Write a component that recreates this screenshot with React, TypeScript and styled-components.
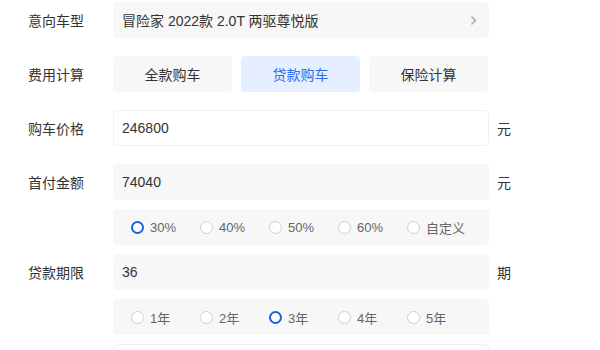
import React from "react";
import styled, { createGlobalStyle } from "styled-components";

const Global = createGlobalStyle`
  html, body { margin: 0; padding: 0; background: #fff; }
  body { font-family: "Liberation Sans", "Noto Sans CJK SC", sans-serif; color: #333; }
`;

const Form = styled.div`
  display: flex;
  flex-direction: column;
  padding: 2px 0 0 28px;
`;

const Row = styled.div<{ $gap: number }>`
  display: flex;
  align-items: center;
  margin-top: ${(p) => p.$gap}px;
  height: 36px;
`;

const Label = styled.div`
  width: 85px;
  font-size: 14px;
  color: #333;
  flex-shrink: 0;
`;

const Field = styled.div<{ $white?: boolean }>`
  box-sizing: border-box;
  width: 376px;
  height: 36px;
  border-radius: 4px;
  background: ${(p) => (p.$white ? "#fff" : "#f7f7f7")};
  border: 1px solid ${(p) => (p.$white ? "#f0f0f0" : "#f7f7f7")};
  display: flex;
  align-items: center;
  justify-content: space-between;
  padding: 0 11px 0 8px;
  font-size: 14px;
  color: #333;
`;

const Unit = styled.div`
  margin-left: 8px;
  font-size: 14px;
  color: #333;
`;

const Tabs = styled.div`
  display: grid;
  grid-template-columns: repeat(3, 119px);
  gap: 9px;
`;

const Tab = styled.div<{ $active?: boolean }>`
  height: 36px;
  border-radius: 4px;
  display: flex;
  align-items: center;
  justify-content: center;
  font-size: 14px;
  background: ${(p) => (p.$active ? "#e6efff" : "#f7f7f7")};
  color: ${(p) => (p.$active ? "#2b6bf0" : "#333")};
`;

const RadioGroup = styled.div`
  box-sizing: border-box;
  width: 376px;
  height: 36px;
  border-radius: 4px;
  background: #f7f7f7;
  display: flex;
  align-items: center;
  padding-left: 18px;
`;

const RadioItem = styled.div`
  width: 69px;
  display: flex;
  align-items: center;
  gap: 6px;
  font-size: 13px;
  color: #666;
`;

const Circle = styled.span<{ $on?: boolean }>`
  box-sizing: border-box;
  width: 13px;
  height: 13px;
  border-radius: 50%;
  background: #fff;
  border: ${(p) => (p.$on ? "2.5px solid #1a5fe0" : "1px solid #cfcfd4")};
  flex-shrink: 0;
`;

const Spacer = styled.div`
  width: 85px;
  flex-shrink: 0;
`;

const Chevron = () => (
  <svg width="7" height="11" viewBox="0 0 7 11">
    <polyline points="1.5,1.5 5.5,5.5 1.5,9.5" fill="none" stroke="#a8a8a8" strokeWidth="1.4" />
  </svg>
);

const Radios = ({ items, sel }: { items: string[]; sel: number }) => (
  <RadioGroup>
    {items.map((t, i) => (
      <RadioItem key={t}>
        <Circle $on={i === sel} />
        {t}
      </RadioItem>
    ))}
  </RadioGroup>
);

export default function App() {
  return (
    <>
      <Global />
      <Form>
        <Row $gap={0}>
          <Label>意向车型</Label>
          <Field>
            <span>冒险家 2022款 2.0T 两驱尊悦版</span>
            <Chevron />
          </Field>
        </Row>
        <Row $gap={18}>
          <Label>费用计算</Label>
          <Tabs>
            <Tab>全款购车</Tab>
            <Tab $active>贷款购车</Tab>
            <Tab>保险计算</Tab>
          </Tabs>
        </Row>
        <Row $gap={18}>
          <Label>购车价格</Label>
          <Field $white>246800</Field>
          <Unit>元</Unit>
        </Row>
        <Row $gap={18}>
          <Label>首付金额</Label>
          <Field>74040</Field>
          <Unit>元</Unit>
        </Row>
        <Row $gap={9}>
          <Spacer />
          <Radios items={["30%", "40%", "50%", "60%", "自定义"]} sel={0} />
        </Row>
        <Row $gap={9}>
          <Label>贷款期限</Label>
          <Field>36</Field>
          <Unit>期</Unit>
        </Row>
        <Row $gap={9}>
          <Spacer />
          <Radios items={["1年", "2年", "3年", "4年", "5年"]} sel={2} />
        </Row>
        <Row $gap={9}>
          <Spacer />
          <Field $white />
        </Row>
      </Form>
    </>
  );
}
